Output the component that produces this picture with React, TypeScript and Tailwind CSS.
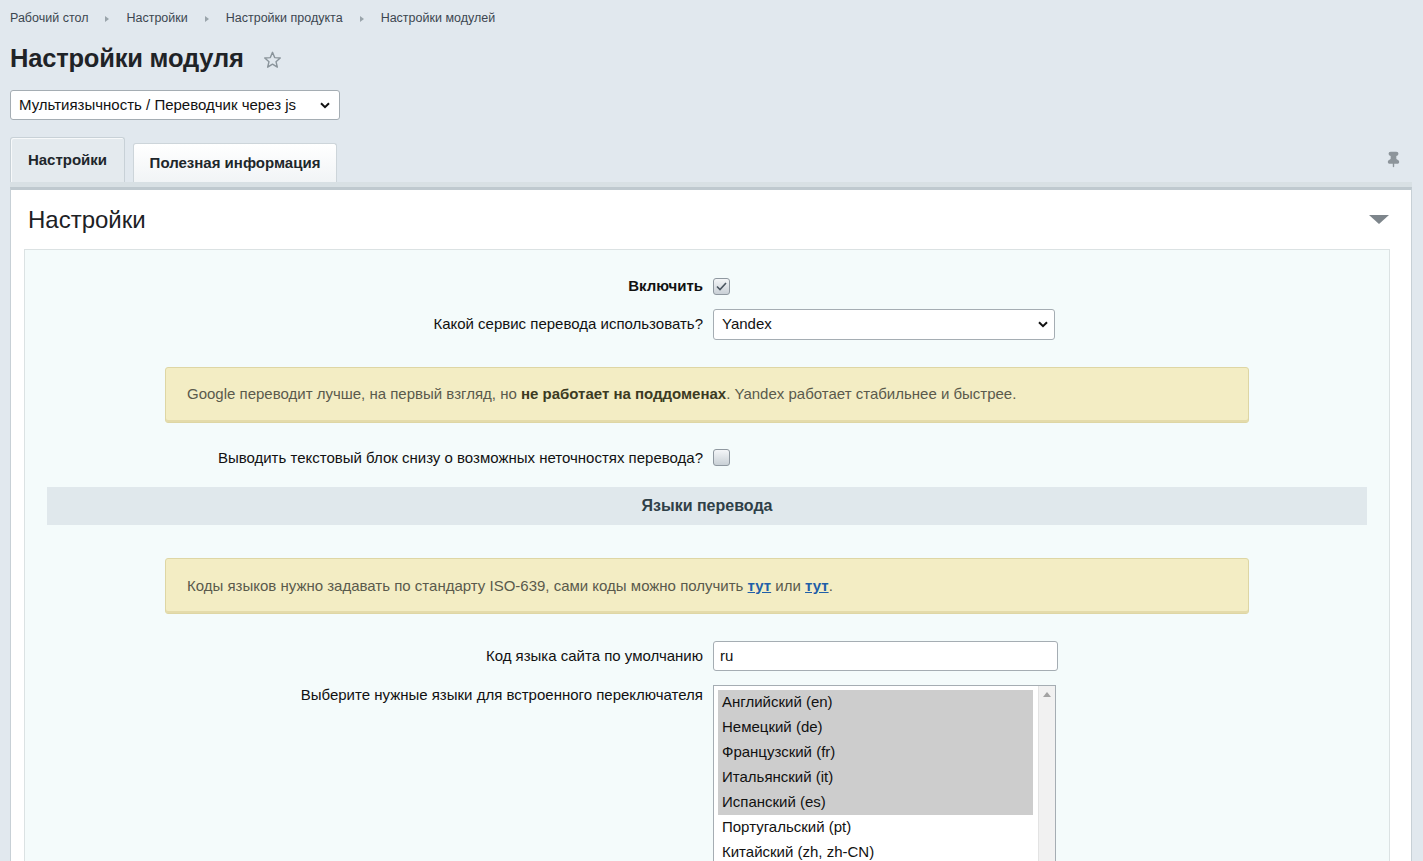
import React from 'react';
import { Pin } from 'lucide-react';

const crumbs = ['Рабочий стол', 'Настройки', 'Настройки продукта', 'Настройки модулей'];

const languages = [
  { name: 'Английский (en)', selected: true },
  { name: 'Немецкий (de)', selected: true },
  { name: 'Французский (fr)', selected: true },
  { name: 'Итальянский (it)', selected: true },
  { name: 'Испанский (es)', selected: true },
  { name: 'Португальский (pt)', selected: false },
  { name: 'Китайский (zh, zh-CN)', selected: false },
];

const Chevron = () => (
  <svg width="10" height="7" viewBox="0 0 10 7" className="shrink-0">
    <path d="M1 1.2 L5 5.2 L9 1.2" fill="none" stroke="#111" strokeWidth="2" />
  </svg>
);

const Checkbox: React.FC<{ checked?: boolean }> = ({ checked }) => (
  <div className="w-[17px] h-[17px] rounded-[3px] border border-[#8f98a0] bg-gradient-to-b from-[#f4f6f8] to-[#c9d0d6] flex items-center justify-center">
    {checked && (
      <svg width="11" height="9" viewBox="0 0 11 9">
        <path d="M1 4.5 L4 7.5 L10 1" fill="none" stroke="#4b5660" strokeWidth="1.6" />
      </svg>
    )}
  </div>
);

const Row: React.FC<{ label: React.ReactNode; children: React.ReactNode; top?: boolean }> = ({ label, children, top }) => (
  <div className={`grid grid-cols-2 ${top ? 'items-start' : 'items-center'}`}>
    <div className="text-right pr-[4px] text-[15px] text-[#111]">{label}</div>
    <div className="pl-[6px]">{children}</div>
  </div>
);

const Note: React.FC<{ children: React.ReactNode }> = ({ children }) => (
  <div className="mx-[140px] h-[56px] flex items-center px-[21px] bg-[#f3edc4] border border-[#ded6a4] rounded-[3px] shadow-[inset_0_-2px_0_#e4dbab] text-[15px] text-[#5a5a4c]">
    {children}
  </div>
);

export default function App() {
  return (
    <div className="min-h-screen bg-[#e1e8ee] font-['Liberation_Sans',Arial,sans-serif] pl-[10px] pr-[11px] pt-[11px] overflow-hidden">
      <nav className="flex items-center text-[12.5px] text-[#3c4650] h-[15px]">
        {crumbs.map((c, i) => (
          <React.Fragment key={c}>
            {i > 0 && (
              <span className="mx-[17px] inline-block w-0 h-0 border-y-[3.5px] border-y-transparent border-l-[4px] border-l-[#9aa4ab]" />
            )}
            <span>{c}</span>
          </React.Fragment>
        ))}
      </nav>

      <div className="flex items-center mt-[18px] h-[28px]">
        <h1 className="text-[25.5px] font-bold text-[#1f2327] tracking-[-0.2px]">Настройки модуля</h1>
        <svg width="21" height="20" viewBox="0 0 24 24" className="ml-[18px] mt-[3px]">
          <path
            d="M12 2.8 L14.6 9.1 L21.3 9.6 L16.2 14 L17.8 20.6 L12 17 L6.2 20.6 L7.8 14 L2.7 9.6 L9.4 9.1 Z"
            fill="none"
            stroke="#8a949b"
            strokeWidth="1.7"
            strokeLinejoin="round"
          />
        </svg>
      </div>

      <div className="mt-[18px] w-[330px] h-[30px] bg-white border border-[#a5adb3] rounded-[3px] flex items-center justify-between pl-[8px] pr-[9px] text-[15px] text-[#111]">
        <span>Мультиязычность / Переводчик через js</span>
        <Chevron />
      </div>

      <div className="mt-[17px] flex items-end relative">
        <div className="w-[115px] h-[45px] bg-[#e4eaee] border border-b-0 border-[#c8d1d7] rounded-t-[3px] flex items-center justify-center text-[15px] font-bold text-[#20262b] shadow-[inset_1px_1px_0_#f7f9fa]">
          Настройки
        </div>
        <div className="ml-[8px] w-[204px] h-[39px] bg-gradient-to-b from-white to-[#f1f4f6] border border-b-0 border-[#cdd5da] rounded-t-[3px] flex items-center justify-center text-[15px] font-bold text-[#20262b]">
          Полезная информация
        </div>
        <div className="absolute right-[10px] top-[14px]">
          <Pin size={17} className="text-[#8d959b] fill-[#8d959b]" />
        </div>
      </div>

      <div className="bg-white border border-[#c7d0d6] border-t-[#bfc9cf] border-t-[3px] shadow-[0_-5px_0_#d8e0e4] mt-[5px] pb-[40px]">
        <div className="h-[59px] flex items-center justify-between pl-[17px] pr-[22px]">
          <h2 className="text-[24px] text-[#1d2125] font-normal">Настройки</h2>
          <span className="inline-block w-0 h-0 border-x-[10px] border-x-transparent border-t-[9px] border-t-[#7d858b]" />
        </div>

        <div className="ml-[13px] mr-[21px] bg-[#f4fbfb] border border-[#dbe2e3] pt-[25px] pb-[20px]">
          <Row label={<b>Включить</b>}>
            <Checkbox checked />
          </Row>

          <div className="mt-[11px]">
            <Row label="Какой сервис перевода использовать?">
              <div className="w-[342px] h-[31px] bg-white border border-[#a5adb3] rounded-[3px] flex items-center justify-between pl-[8px] pr-[6px] text-[15px] text-[#111]">
                <span>Yandex</span>
                <Chevron />
              </div>
            </Row>
          </div>

          <div className="mt-[27px]">
            <Note>
              <span>
                Google переводит лучше, на первый взгляд, но{' '}
                <b className="text-[#3b3a22]">не работает на поддоменах</b>. Yandex работает стабильнее и быстрее.
              </span>
            </Note>
          </div>

          <div className="mt-[24px]">
            <Row label="Выводить текстовый блок снизу о возможных неточностях перевода?">
              <Checkbox />
            </Row>
          </div>

          <div className="mt-[18px] mx-[22px] h-[38px] bg-[#e0e8ec] flex items-center justify-center text-[16px] font-bold text-[#2f4048]">
            Языки перевода
          </div>

          <div className="mt-[33px]">
            <Note>
              <span>
                Коды языков нужно задавать по стандарту ISO-639, сами коды можно получить{' '}
                <a className="font-bold text-[#1f5fa8] underline">тут</a> или{' '}
                <a className="font-bold text-[#1f5fa8] underline">тут</a>.
              </span>
            </Note>
          </div>

          <div className="mt-[27px]">
            <Row label="Код языка сайта по умолчанию">
              <div className="w-[345px] h-[30px] bg-white border border-[#a5adb3] rounded-[3px] flex items-center pl-[6px] text-[15px] text-[#111]">
                ru
              </div>
            </Row>
          </div>

          <div className="mt-[14px]">
            <Row label={<span className="relative -top-[1px]">Выберите нужные языки для встроенного переключателя</span>} top>
              <div className="w-[343px] h-[190px] bg-white border border-[#a5adb3] flex pl-[4px] pt-[4px]">
                <div className="flex-1">
                  {languages.map((l) => (
                    <div
                      key={l.name}
                      className={`h-[25px] flex items-center pl-[4px] text-[15px] text-[#111] ${l.selected ? 'bg-[#cdcdcd]' : ''}`}
                    >
                      {l.name}
                    </div>
                  ))}
                </div>
                <div className="w-[17px] ml-[5px] -mt-[4px] bg-[#f1f1f1] border-l border-[#e3e3e3] flex justify-center pt-[6px]">
                  <span className="inline-block w-0 h-0 border-x-[4px] border-x-transparent border-b-[5px] border-b-[#a3a3a3]" />
                </div>
              </div>
            </Row>
          </div>
        </div>
      </div>
    </div>
  );
}
